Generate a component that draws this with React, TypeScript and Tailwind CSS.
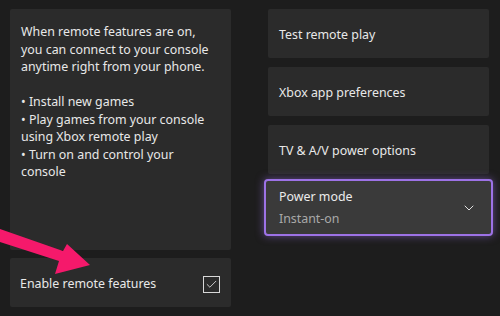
import { Check, ChevronDown } from 'lucide-react';

const font = { fontFamily: '"Noto Sans", "Open Sans", sans-serif' };

const Card = ({ label }: { label: string }) => (
    <div className="h-[49px] bg-[#2b2b2b] rounded-[2px] flex items-center pl-[11px] pt-[3px] text-[12.4px] text-[#e8e8e8]">
        {label}
    </div>
);

export default function App() {
    return (
        <div className="relative w-[500px] h-[316px] bg-[#1d1d1d] overflow-hidden" style={font}>
            <div className="flex pt-[9px] pl-[10px] gap-[37px]">
                <div className="w-[221px] flex flex-col gap-[8px]">
                    <div className="h-[241px] bg-[#2b2b2b] rounded-[2px] pt-[14px] pl-[11px] pr-3 text-[12.4px] leading-[17.5px] text-[#e8e8e8]">
                        <p>When remote features are on, you can connect to your console anytime right from your phone.</p>
                        <p className="mt-[17.5px]">• Install new games</p>
                        <p>• Play games from your console using Xbox remote play</p>
                        <p>• Turn on and control your console</p>
                    </div>
                    <div className="h-[49px] bg-[#2b2b2b] rounded-[2px] flex items-center justify-between pl-[10px] pr-[11px] pt-[4px] text-[12.4px] text-[#e8e8e8]">
                        <span>Enable remote features</span>
                        <div className="w-[17px] h-[17px] border-[1.5px] border-[#d8d8d8] flex items-center justify-center">
                            <Check size={13} strokeWidth={1.6} className="text-[#e0e0e0]" />
                        </div>
                    </div>
                </div>
                <div className="w-[221px] flex flex-col gap-[9px]">
                    <Card label="Test remote play" />
                    <Card label="Xbox app preferences" />
                    <Card label="TV & A/V power options" />
                    <div className="-mx-[4px] -mt-[4px] h-[57px] bg-[#3a3a3a] rounded-[4px] border-2 border-[#9d72e6] shadow-[0_0_8px_rgba(157,114,230,0.55)] flex items-center justify-between pl-[13px] pr-[14px]">
                        <div className="flex flex-col leading-[22px]">
                            <span className="text-[12.4px] text-[#ececec]">Power mode</span>
                            <span className="text-[12.4px] text-[#a9a9a9]">Instant-on</span>
                        </div>
                        <ChevronDown size={16} strokeWidth={1.5} className="text-[#e0e0e0]" />
                    </div>
                </div>
            </div>
            {/* annotation arrow */}
            <svg className="absolute left-0 top-0" width="500" height="316" viewBox="0 0 500 316">
                <polygon points="0,229 63,251 67,244 90,265 55,274 59,261 0,242" fill="#f5196b" />
            </svg>
        </div>
    );
}
